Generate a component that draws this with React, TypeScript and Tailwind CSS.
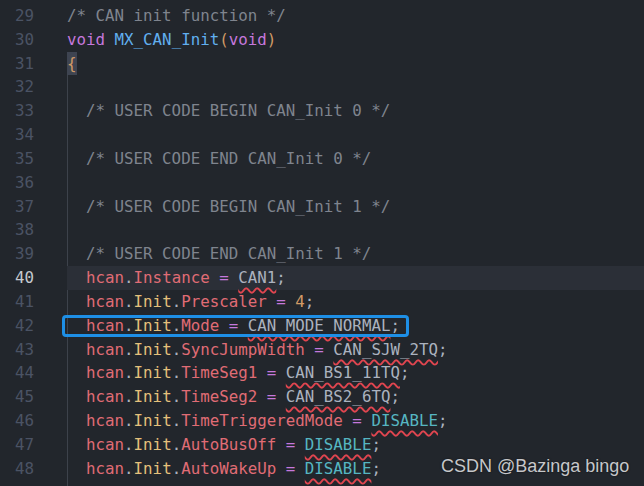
import React from "react";

type Tok = [string, string] | [string, string, true];

const C = {
  cm: "text-[#7f848e]",
  kw: "text-[#c678dd]",
  fn: "text-[#61afef]",
  pn: "text-[#d19a66]",
  vr: "text-[#e06c75]",
  cl: "text-[#e5c07b]",
  tx: "text-[#abb2bf]",
  en: "text-[#56b6c2]",
};

function assign(prop: string, value: string, kind: "tx" | "en" | "num", squiggle = true): Tok[] {
  const v: Tok =
    kind === "num" ? [value, C.pn] : squiggle ? [value, kind === "en" ? C.en : C.tx, true] : [value, C.tx];
  return [
    ["  ", C.tx],
    ["hcan", C.vr],
    [".", C.tx],
    ["Init", C.cl],
    [".", C.tx],
    [prop, C.vr],
    [" ", C.tx],
    ["=", C.kw],
    [" ", C.tx],
    v,
    [";", C.tx],
  ];
}

const LINES: { n: number; toks: Tok[] }[] = [
  { n: 29, toks: [["/* CAN init function */", C.cm]] },
  {
    n: 30,
    toks: [
      ["void", C.kw],
      [" ", C.tx],
      ["MX_CAN_Init", C.fn],
      ["(", C.pn],
      ["void", C.kw],
      [")", C.pn],
    ],
  },
  { n: 31, toks: [["{", C.pn]] },
  { n: 32, toks: [] },
  { n: 33, toks: [["  /* USER CODE BEGIN CAN_Init 0 */", C.cm]] },
  { n: 34, toks: [] },
  { n: 35, toks: [["  /* USER CODE END CAN_Init 0 */", C.cm]] },
  { n: 36, toks: [] },
  { n: 37, toks: [["  /* USER CODE BEGIN CAN_Init 1 */", C.cm]] },
  { n: 38, toks: [] },
  { n: 39, toks: [["  /* USER CODE END CAN_Init 1 */", C.cm]] },
  {
    n: 40,
    toks: [
      ["  ", C.tx],
      ["hcan", C.vr],
      [".", C.tx],
      ["Instance", C.vr],
      [" ", C.tx],
      ["=", C.kw],
      [" ", C.tx],
      ["CAN1", C.tx, true],
      [";", C.tx],
    ],
  },
  { n: 41, toks: assign("Prescaler", "4", "num") },
  { n: 42, toks: assign("Mode", "CAN_MODE_NORMAL", "tx") },
  { n: 43, toks: assign("SyncJumpWidth", "CAN_SJW_2TQ", "tx") },
  { n: 44, toks: assign("TimeSeg1", "CAN_BS1_11TQ", "tx") },
  { n: 45, toks: assign("TimeSeg2", "CAN_BS2_6TQ", "tx") },
  { n: 46, toks: assign("TimeTriggeredMode", "DISABLE", "en") },
  { n: 47, toks: assign("AutoBusOff", "DISABLE", "en") },
  { n: 48, toks: assign("AutoWakeUp", "DISABLE", "en") },
  { n: 49, toks: assign("ReceiveFifoLocked", "DISABLE", "en") },
];

function CodeLine({ n, toks }: { n: number; toks: Tok[] }) {
  const active = n === 40;
  const guide = n >= 32;
  return (
    <div className="flex h-[23.84px] leading-[23.84px]">
      <div className={["w-[34px] shrink-0 text-right", active ? "text-[#c5c9d0]" : "text-[#4b5364]"].join(" ")}>
        {n < 49 ? n : ""}
      </div>
      <div className="w-[33px] shrink-0" />
      <div
        className={[
          "flex-1 whitespace-pre",
          active ? "bg-[#2b2f37]" : "",
          guide && !active ? "shadow-[inset_1px_0_0_#3d424b]" : "",
        ].join(" ")}
      >
        {n === 31 ? (
          <span className="inline-block h-[23.84px] bg-[#3e4451] text-[#d19a66]">{"{"}</span>
        ) : (
          toks.map((t, i) => (
            <span
              key={i}
              className={[
                t[1],
                t[2] ? "underline decoration-wavy decoration-[#e0454f] decoration-[1.5px] underline-offset-[4px]" : "",
              ].join(" ")}
            >
              {t[0]}
            </span>
          ))
        )}
      </div>
    </div>
  );
}

export default function App() {
  return (
    <div className="relative h-[486px] w-[644px] overflow-hidden bg-[#22262c] pt-[4px] font-['DejaVu_Sans_Mono',monospace] text-[15.8px]">
      {LINES.map((l) => (
        <CodeLine key={l.n} n={l.n} toks={l.toks} />
      ))}

      {/* highlight box around line 42 */}
      <div className="absolute left-[62px] top-[315px] h-[22px] w-[347px] rounded-[4px] border-[3px] border-[#1e8fe6]" />

      {/* watermark */}
      <div className="absolute left-[441px] top-[455px] font-['Liberation_Sans',Arial,sans-serif] text-[18px] leading-[22px] text-[#c6c7ca] [text-shadow:0_0_2px_rgba(0,0,0,0.6)]">
        CSDN @Bazinga bingo
      </div>
    </div>
  );
}
